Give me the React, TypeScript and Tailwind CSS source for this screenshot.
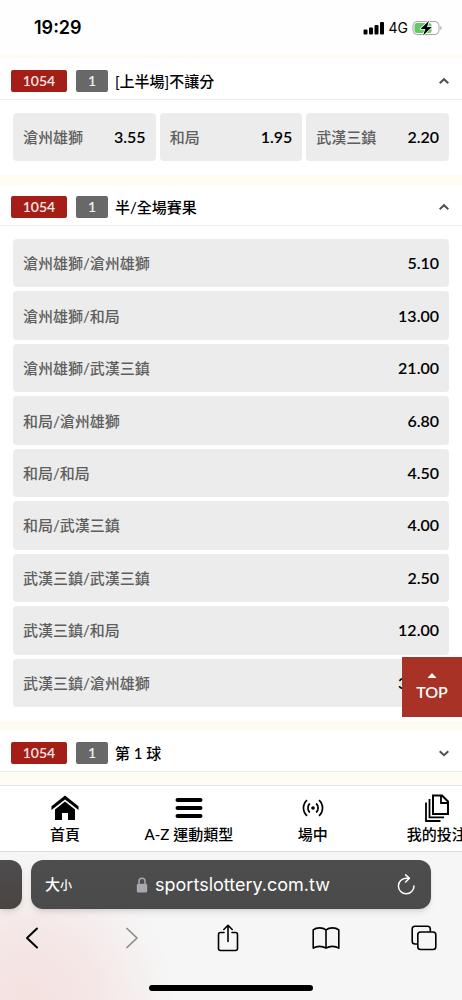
import { useState, type ReactNode } from "react";

type Odds = { name: string; price: string };

const FIRST_HALF: Odds[] = [
  { name: "滄州雄獅", price: "3.55" },
  { name: "和局", price: "1.95" },
  { name: "武漢三鎮", price: "2.20" },
];

const HALF_FULL: Odds[] = [
  { name: "滄州雄獅/滄州雄獅", price: "5.10" },
  { name: "滄州雄獅/和局", price: "13.00" },
  { name: "滄州雄獅/武漢三鎮", price: "21.00" },
  { name: "和局/滄州雄獅", price: "6.80" },
  { name: "和局/和局", price: "4.50" },
  { name: "和局/武漢三鎮", price: "4.00" },
  { name: "武漢三鎮/武漢三鎮", price: "2.50" },
  { name: "武漢三鎮/和局", price: "12.00" },
  { name: "武漢三鎮/滄州雄獅", price: "31.00" },
];

function StatusBar() {
  return (
    <div className="flex h-[54px] items-center justify-between pt-[2px] pr-[19px] pl-[34px] font-['Inter','Liberation_Sans',sans-serif] text-black">
      <span className="text-lg font-semibold">19:29</span>
      <div className="flex items-center gap-1">
        <svg width="22" height="14" viewBox="0 0 22 14" aria-hidden="true">
          <rect x="0.5" y="8.5" width="4" height="5" rx="1" />
          <rect x="6" y="6.5" width="4" height="7" rx="1" />
          <rect x="11.5" y="4" width="4" height="9.500" rx="1" />
          <rect x="17" y="1" width="4" height="12.500" rx="1" />
        </svg>
        <span className="text-sm">4G</span>
        <svg width="31" height="16" viewBox="0 0 31 16" aria-hidden="true">
          <rect x="1" y="1.500" width="26" height="13" rx="4" fill="none" stroke="#a6a6a6" />
          <path d="M28.300 6v4c1.800-.6 1.800-3.400 0-4z" fill="#a6a6a6" />
          <rect x="2.500" y="3" width="17" height="10" rx="2.500" fill="#64c866" />
          <path
            d="M17 .8 8.500 9h4.800l-2.200 6.400L19.800 7H15z"
            fill="#000"
            stroke="#fff"
            strokeWidth="1.600"
            paintOrder="stroke"
            strokeLinejoin="round"
          />
        </svg>
      </div>
    </div>
  );
}

function MarketHeader({
  title,
  open,
  onToggle,
}: {
  title: string;
  open: boolean;
  onToggle: () => void;
}) {
  return (
    <button
      type="button"
      aria-expanded={open}
      onClick={onToggle}
      className="flex h-[41px] w-full items-center border-b border-[#ececef] pt-1 pr-3 pl-[11px] text-left"
    >
      <span className="mr-[9px] flex h-[22px] w-14 items-center justify-center rounded-xs bg-[#a41d16] text-sm font-semibold text-white/90">
        1054
      </span>
      <span className="mr-[7px] flex h-[22px] w-8 items-center justify-center rounded-xs bg-[#686868] text-sm font-semibold text-white/90">
        1
      </span>
      <span className="flex-1 text-[15px] leading-5 font-medium text-black">{title}</span>
      <svg width="12" height="12" viewBox="0 0 12 12" fill="none" stroke="#505050" strokeWidth="2" aria-hidden="true">
        {open ? <path d="M1.700 8.200 6 4.200l4.300 4" /> : <path d="M1.700 4.200l4.300 4 4.300-4" />}
      </svg>
    </button>
  );
}

function Market({ title, defaultOpen, children }: { title: string; defaultOpen: boolean; children?: ReactNode }) {
  const [open, setOpen] = useState(defaultOpen);

  return (
    <section className="bg-white">
      <MarketHeader title={title} open={open} onToggle={() => setOpen(!open)} />
      {open ? <div className="px-[13px] pt-[13px] pb-[14px]">{children}</div> : null}
    </section>
  );
}

function OddsButton({ name, price }: Odds) {
  return (
    <button
      type="button"
      className="flex min-h-12 items-center justify-between rounded-sm bg-[#ececec] px-[10px] text-[15px] leading-5"
    >
      <span className="font-medium text-[#5e5e5e]">{name}</span>
      <span className="text-base font-semibold text-black">{price}</span>
    </button>
  );
}

function NavItem({ label, children }: { label: string; children: ReactNode }) {
  return (
    <a href="#" className="flex w-[27%] shrink-0 flex-col items-center">
      <span className="flex h-7 items-center">{children}</span>
      <span className="text-[15px] leading-6 font-medium whitespace-nowrap text-black">{label}</span>
    </a>
  );
}

function BottomNav() {
  return (
    <nav className="flex h-[66px] overflow-hidden border-t border-[#e2e2e2] bg-white pt-2 pl-[3px]">
      <NavItem label="首頁">
        <svg width="28" height="26" viewBox="0 0 28 26" aria-hidden="true">
          <path d="M14 .5.500 11.300v3.800L14 4.500l13.500 10.600v-3.800z" />
          <path d="M14 6.500 4 14.400V25h7v-7h6v7h7V14.400z" />
        </svg>
      </NavItem>
      <NavItem label="A-Z 運動類型">
        <svg width="28" height="20" viewBox="0 0 28 20" stroke="#000" strokeWidth="4" strokeLinecap="round" aria-hidden="true">
          <path d="M2.500 2h23M2.500 10h23M2.500 18h23" />
        </svg>
      </NavItem>
      <NavItem label="場中">
        <svg width="22" height="18" viewBox="0 0 22 18" fill="none" stroke="#000" strokeWidth="1.700" aria-hidden="true">
          <circle cx="11" cy="9" r="1.800" fill="#000" stroke="none" />
          <path d="M7.800 4.500c-2.500 2.300-2.500 6.700 0 9M14.200 4.500c2.500 2.300 2.500 6.700 0 9" />
          <path d="M5 1.200c-4.700 4.300-4.700 11.300 0 15.600M17 1.200c4.700 4.300 4.700 11.300 0 15.600" />
        </svg>
      </NavItem>
      <NavItem label="我的投注">
        <svg width="24" height="28" viewBox="0 0 24 28" fill="none" stroke="#000" strokeWidth="1.800" aria-hidden="true">
          <path d="M8 1.500h9l6 6V20H8z" strokeWidth="2" />
          <path d="M16 1.500V9h7" />
          <path d="M4.500 5v18.300H19M1 8.500V27h14.500" />
        </svg>
      </NavItem>
    </nav>
  );
}

function BrowserChrome() {
  return (
    <footer className="overflow-hidden border-t border-[#dcdcdc] bg-[#f6f6f6] bg-[radial-gradient(circle_at_6%_100%,#f4e1df_0%,#f4e7e6_14%,#f6f6f6_32%)] pt-2 pb-[9px] font-['Inter','Liberation_Sans','Noto_Sans_CJK_TC',sans-serif]">
      <div className="flex gap-[9px] pr-[31px]">
        <div className="h-[49px] w-[22px] shrink-0 rounded-r-xl bg-linear-to-b from-[#4d4d4d] to-[#4b4341] shadow-md" />
        <div className="flex h-[49px] min-w-0 flex-1 items-center justify-between rounded-xl bg-linear-to-b from-[#4d4d4d] to-[#4a4a4a] px-[14px] text-white shadow-md">
          <button type="button" className="w-11 text-left text-[15px] leading-5 font-medium">
            大<span className="text-xs">小</span>
          </button>
          <label className="flex items-center gap-[7px]">
            <svg width="12" height="16" viewBox="0 0 12 16" aria-hidden="true">
              <path d="M3 8V4.300C3 .3 9 .3 9 4.300V8" fill="none" stroke="#a9a8ae" strokeWidth="1.500" />
              <rect x="0.800" y="6.800" width="10.400" height="8.700" rx="1.500" fill="#a9a8ae" />
            </svg>
            <input
              type="text"
              aria-label="網址"
              defaultValue="sportslottery.com.tw"
              className="field-sizing-content bg-transparent text-lg outline-none"
            />
          </label>
          <button type="button" aria-label="重新載入" className="flex w-10 justify-end">
            <svg width="21" height="22" viewBox="0 0 21 22" fill="none" stroke="#fff" strokeWidth="1.500" strokeLinecap="round" strokeLinejoin="round" aria-hidden="true">
              <path d="M18 12a7.800 7.800 0 1 1-7.800-7.800h3" />
              <path d="M9.600.9 13.400 4.300 9.600 8" />
            </svg>
          </button>
        </div>
      </div>

      <div className="mt-[15px] flex items-center justify-between pr-6 pl-[18px] text-black">
        <button type="button" aria-label="上一頁">
          <svg width="28" height="28" viewBox="0 0 28 28" fill="none" stroke="currentColor" strokeWidth="2" strokeLinecap="round" strokeLinejoin="round" aria-hidden="true">
            <path d="M19 4.500 9 14l10 9.500" />
          </svg>
        </button>
        <button type="button" aria-label="下一頁" className="text-[#8b8b8b]">
          <svg width="28" height="28" viewBox="0 0 28 28" fill="none" stroke="currentColor" strokeWidth="1.700" strokeLinecap="round" strokeLinejoin="round" aria-hidden="true">
            <path d="M11 4.500 21 14l-10 9.500" />
          </svg>
        </button>
        <button type="button" aria-label="分享">
          <svg width="28" height="28" viewBox="0 0 28 28" fill="none" stroke="currentColor" strokeWidth="1.600" strokeLinecap="round" strokeLinejoin="round" aria-hidden="true">
            <path d="M10 8.500H6.500a2 2 0 0 0-2 2v14a2 2 0 0 0 2 2h15a2 2 0 0 0 2-2v-14a2 2 0 0 0-2-2H18" />
            <path d="M14 17.500V1.500M9.800 5.500 14 1.300l4.200 4.200" />
          </svg>
        </button>
        <button type="button" aria-label="書籤">
          <svg width="28" height="28" viewBox="0 0 28 28" fill="none" stroke="currentColor" strokeWidth="1.600" strokeLinejoin="round" aria-hidden="true">
            <path d="M14 5.800C10.500 3.200 4.500 3.200 1.200 5.800v18.400c3.300-2.400 9.300-2.400 12.800 0 3.500-2.400 9.500-2.400 12.800 0V5.800C23.500 3.200 17.500 3.200 14 5.800zM14 5.800v18.400" />
          </svg>
        </button>
        <button type="button" aria-label="分頁">
          <svg width="28" height="28" viewBox="0 0 28 28" fill="none" stroke="currentColor" strokeWidth="1.600" strokeLinejoin="round" aria-hidden="true">
            <rect x="7.800" y="8" width="18" height="17.500" rx="2.800" />
            <path d="M7.800 20H5a2.800 2.800 0 0 1-2.800-2.800V5A2.800 2.800 0 0 1 5 2.200h12.500A2.800 2.800 0 0 1 20.300 5v3" />
          </svg>
        </button>
      </div>

      <div className="mx-auto mt-[33px] h-[6px] w-[164px] rounded-full bg-black" />
    </footer>
  );
}

export default function App() {
  return (
    <div className="flex min-h-screen flex-col bg-[#fffcf3] font-['Lato','Noto_Sans_CJK_TC',sans-serif]">
      <header className="bg-[#fefefe]">
        <StatusBar />
      </header>

      <main className="relative flex flex-1 flex-col gap-[10px] pt-[5px]">
        <Market title="[上半場]不讓分" defaultOpen>
          <div className="grid grid-cols-3 gap-1">
            {FIRST_HALF.map((odds) => (
              <OddsButton key={odds.name} {...odds} />
            ))}
          </div>
        </Market>

        <Market title="半/全場賽果" defaultOpen>
          <div className="grid min-h-[468px] auto-rows-fr gap-1">
            {HALF_FULL.map((odds) => (
              <OddsButton key={odds.name} {...odds} />
            ))}
          </div>
        </Market>

        <Market title="第 1 球" defaultOpen={false} />

        <button
          type="button"
          onClick={() => window.scrollTo({ top: 0 })}
          className="absolute right-0 bottom-[68px] flex h-[60px] w-[60px] flex-col items-center justify-center bg-[#a83226] text-base leading-5 font-semibold text-white"
        >
          <svg width="10" height="5" viewBox="0 0 10 5" fill="#fff" className="mb-1" aria-hidden="true">
            <path d="M5 0 9.500 5h-9z" />
          </svg>
          TOP
        </button>
      </main>

      <BottomNav />
      <BrowserChrome />
    </div>
  );
}
